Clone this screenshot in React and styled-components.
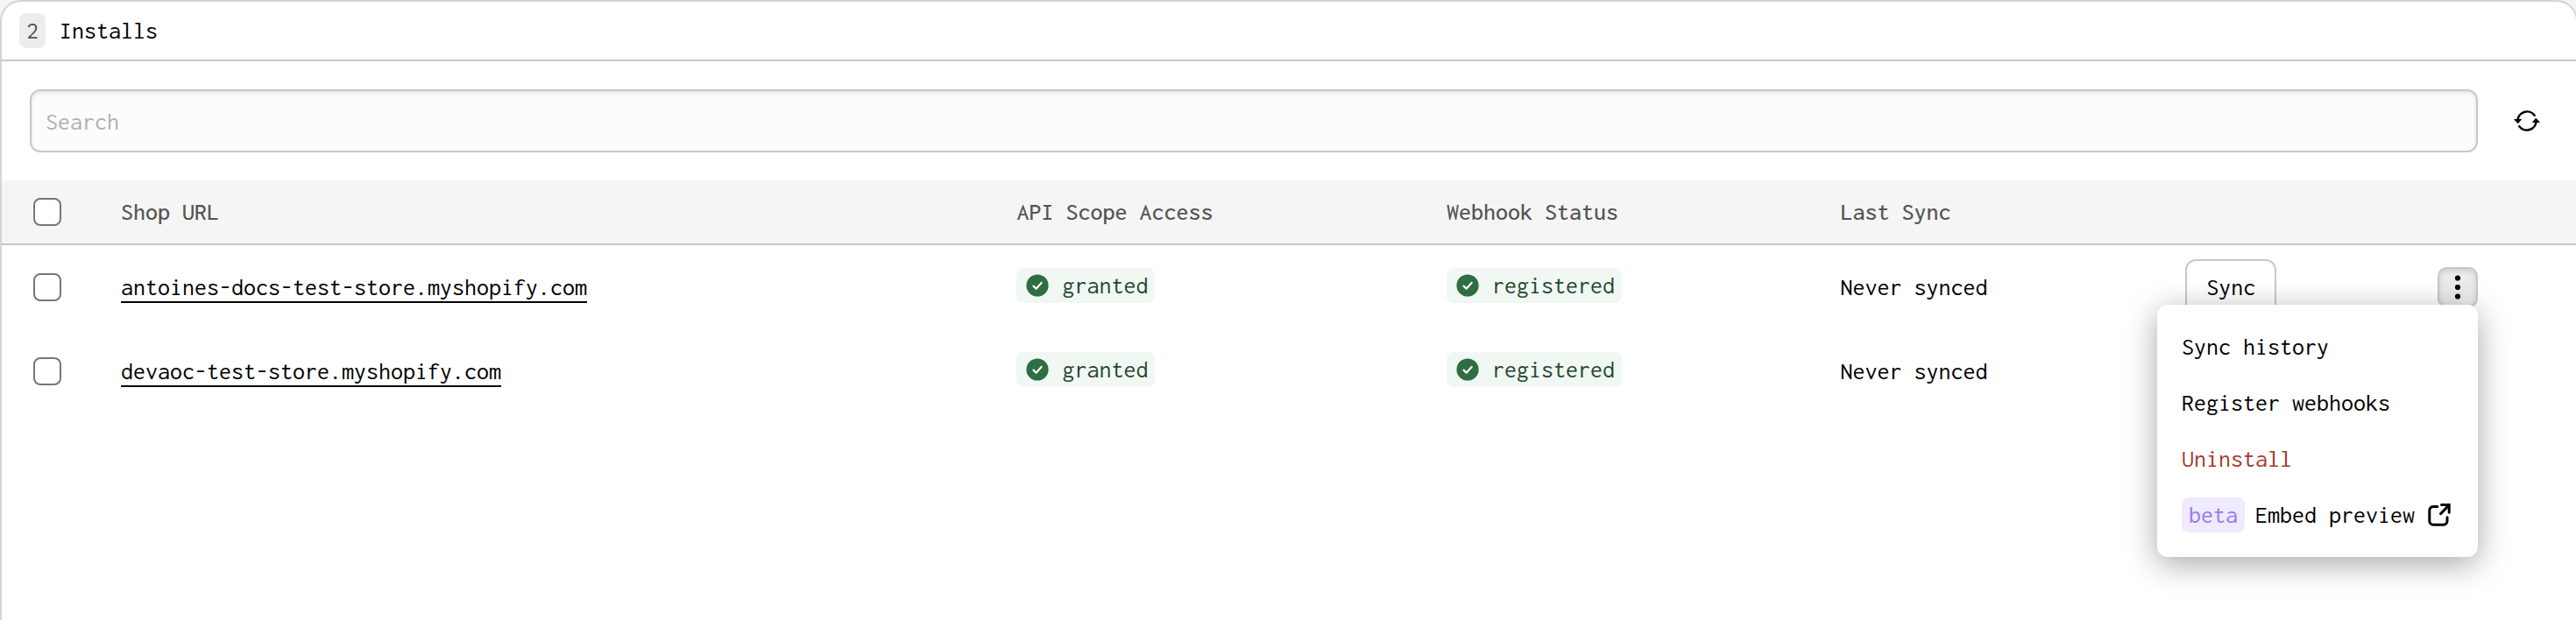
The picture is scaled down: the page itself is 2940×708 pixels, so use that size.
import React, { useState } from 'react';
import styled, { createGlobalStyle } from 'styled-components';

const GlobalStyle = createGlobalStyle`
  *, *::before, *::after {
    box-sizing: border-box;
  }

  body {
    margin: 0;
    background: #f5f5f5;
    color: #000;
    font-family: Inconsolata, 'Noto Sans Mono CJK SC', 'Liberation Mono', monospace;
    font-size: 28px;
    line-height: 40px;
    overflow: hidden;
  }

  button, input {
    font: inherit;
    color: inherit;
  }
`;

/* the right border runs just past the window edge */
const Panel = styled.main`
  margin-right: -2px;
  min-height: 100vh;
  background: #fff;
  border: 2px solid #d4d4d4;
  border-bottom: 0;
  border-radius: 24px 24px 0 0;
`;

const PanelHeader = styled.header`
  display: flex;
  align-items: center;
  gap: 16px;
  padding: 13px 20px;
  border-bottom: 2px solid #c8c8c8;
`;

const Title = styled.h1`
  margin: 0;
  font-size: 28px;
  font-weight: 400;
`;

const Tag = styled.span`
  display: inline-flex;
  align-items: center;
  gap: 12px;
  height: 40px;
  padding: 0 8px;
  border-radius: 8px;
  background: ${props => props.$bg || '#ededed'};
  color: ${props => props.$color || '#555'};
`;

const Toolbar = styled.div`
  display: flex;
  align-items: center;
  gap: 32px;
  padding: 32px;
`;

const SearchInput = styled.input`
  flex: 1;
  min-width: 0;
  height: 72px;
  padding: 0 16px;
  border: 2px solid #c8c8c8;
  border-radius: 12px;
  background: #fcfcfc;
  box-shadow: inset 0 2px 4px rgba(0, 0, 0, 0.1);

  &::placeholder {
    color: #b0b0b0;
    opacity: 1;
  }
`;

const IconButton = styled.button`
  display: flex;
  align-items: center;
  justify-content: center;
  width: 48px;
  height: 48px;
  padding: 0;
  border: 0;
  background: none;
  cursor: pointer;
`;

const Table = styled.table`
  width: 100%;
  table-layout: fixed;
  border-collapse: separate;
  border-spacing: 0;
`;

const Col = styled.col`
  width: ${props => props.$width};
`;

const HeadCell = styled.th`
  height: 74px;
  padding: 0;
  background: #f5f5f5;
  border-bottom: 2px solid #c4c4c4;
  color: #555;
  font-weight: 500;
  text-align: left;
`;

const Cell = styled.td`
  height: 96px;
  padding: 0;
`;

const TagCell = styled(Cell)`
  padding-bottom: 6px;

  ${Tag} {
    vertical-align: middle;
  }
`;

const Checkbox = styled.input`
  appearance: none;
  display: block;
  width: 32px;
  height: 32px;
  margin: 0 0 0 36px;
  border: 2px solid #767676;
  border-radius: 8px;
  background: #fff;

  &:checked {
    background: #767676;
  }
`;

const ShopLink = styled.a`
  color: inherit;
  text-decoration: none;
  border-bottom: 2px solid #000;
  display: inline-block;
  line-height: 32px;
`;

const SyncButton = styled.button`
  display: block;
  height: 64px;
  padding: 0 22px;
  border: 2px solid #c8c8c8;
  border-radius: 12px;
  background: #fff;
  cursor: pointer;
`;

const MenuAnchor = styled.div`
  position: relative;
  width: 46px;
  margin: 0 112px 0 auto;
`;

const MenuButton = styled(IconButton)`
  width: 46px;
  height: 46px;
  border: 2px solid #c8c8c8;
  border-radius: 10px;
  background: #ebebeb;
  box-shadow: inset 0 2px 6px rgba(0, 0, 0, 0.14);
`;

const Menu = styled.div`
  position: absolute;
  top: 43px;
  right: 0;
  z-index: 1;
  padding: 16px 0;
  border-radius: 12px;
  background: #fff;
  box-shadow: 0 8px 36px rgba(0, 0, 0, 0.35);
`;

const MenuItem = styled.button`
  display: flex;
  align-items: center;
  gap: 12px;
  width: 100%;
  height: 64px;
  padding: 0 28px;
  border: 0;
  background: none;
  color: ${props => (props.$danger ? '#a43a2c' : '#000')};
  text-decoration: none;
  white-space: nowrap;
  cursor: pointer;
`;

const RefreshIcon = () => (
  <svg width="32" height="32" viewBox="-16 -16 32 32" aria-hidden="true">
    <g fill="none" stroke="#000" strokeWidth="2.5" strokeLinecap="round">
      <path d="M-10.6 0A10.7 10.7 0 0 1 8.7 -6.2" />
      <path d="M10.6 0A10.7 10.7 0 0 1 -8.7 6.2" />
    </g>
    <g stroke="#000" strokeWidth="1" strokeLinejoin="round">
      <path d="M-14.2 -1.6H-6.6L-10.2 2.7Z" />
      <path d="M14.2 1.6H6.6L10.2 -2.7Z" />
    </g>
  </svg>
);

const CheckIcon = () => (
  <svg width="32" height="32" viewBox="0 0 32 32" aria-hidden="true">
    <circle cx="16" cy="16" r="12.6" fill="#2f6d42" />
    <path
      d="M11.5 16.6L14.6 19.7L20.6 12.9"
      fill="none"
      stroke="#fff"
      strokeWidth="2.2"
      strokeLinecap="round"
      strokeLinejoin="round"
    />
  </svg>
);

const KebabIcon = () => (
  <svg width="32" height="32" viewBox="0 0 32 32" aria-hidden="true">
    <circle cx="16" cy="5.5" r="3.1" />
    <circle cx="16" cy="16" r="3.1" />
    <circle cx="16" cy="26.5" r="3.1" />
  </svg>
);

const ExternalIcon = () => (
  <svg
    width="32"
    height="32"
    viewBox="0 0 32 32"
    fill="none"
    stroke="#000"
    strokeWidth="3"
    strokeLinecap="round"
    aria-hidden="true"
  >
    <path d="M13.8 6.6H9a4.2 4.2 0 0 0-4.2 4.2V23a4.2 4.2 0 0 0 4.2 4.2h11.8A4.2 4.2 0 0 0 25 23v-4.2" />
    <path d="M18.5 4.6h8.7v8.7M26.6 5.2L17.6 14.6" />
  </svg>
);

const StatusTag = ({ children }) => (
  <Tag $bg="#f1f8f4" $color="#26472f">
    <CheckIcon />
    {children}
  </Tag>
);

const installs = [
  { url: 'antoines-docs-test-store.myshopify.com', scope: 'granted', webhook: 'registered', lastSync: 'Never synced' },
  { url: 'devaoc-test-store.myshopify.com', scope: 'granted', webhook: 'registered', lastSync: 'Never synced' },
];

const App = () => {
  const [activeRow, setActiveRow] = useState(0);
  const [menuOpen, setMenuOpen] = useState(true);

  const handleEnter = index => {
    // keep the current row while its menu is open
    if (!menuOpen) setActiveRow(index);
  };

  return (
    <>
      <GlobalStyle />
      <Panel>
        <PanelHeader>
          <Tag>{installs.length}</Tag>
          <Title>Installs</Title>
        </PanelHeader>

        <Toolbar>
          <SearchInput type="search" placeholder="Search" aria-label="Search" />
          <IconButton type="button" aria-label="Refresh">
            <RefreshIcon />
          </IconButton>
        </Toolbar>

        <Table>
          <colgroup>
            <Col $width="136px" />
            <Col $width="34.8%" />
            <Col $width="16.7%" />
            <Col $width="15.3%" />
            <Col $width="13.4%" />
            <Col />
            <Col $width="12%" />
          </colgroup>
          <thead>
            <tr>
              <HeadCell>
                <Checkbox type="checkbox" aria-label="Select all installs" />
              </HeadCell>
              <HeadCell>Shop URL</HeadCell>
              <HeadCell>API Scope Access</HeadCell>
              <HeadCell>Webhook Status</HeadCell>
              <HeadCell>Last Sync</HeadCell>
              <HeadCell colSpan={2} />
            </tr>
          </thead>
          <tbody>
            {installs.map((install, index) => (
              <tr key={install.url} onMouseEnter={() => handleEnter(index)}>
                <Cell>
                  <Checkbox type="checkbox" aria-label={`Select ${install.url}`} />
                </Cell>
                <Cell>
                  <ShopLink href={`https://${install.url}`}>{install.url}</ShopLink>
                </Cell>
                <TagCell>
                  <StatusTag>{install.scope}</StatusTag>
                </TagCell>
                <TagCell>
                  <StatusTag>{install.webhook}</StatusTag>
                </TagCell>
                <Cell>{install.lastSync}</Cell>
                <Cell>
                  {index === activeRow && <SyncButton type="button">Sync</SyncButton>}
                </Cell>
                <Cell>
                  {index === activeRow && (
                    <MenuAnchor>
                      <MenuButton
                        type="button"
                        aria-label="More actions"
                        aria-expanded={menuOpen}
                        onClick={() => setMenuOpen(!menuOpen)}
                      >
                        <KebabIcon />
                      </MenuButton>
                      {menuOpen && (
                        <Menu>
                          <MenuItem type="button">Sync history</MenuItem>
                          <MenuItem type="button">Register webhooks</MenuItem>
                          <MenuItem type="button" $danger>Uninstall</MenuItem>
                          <MenuItem as="a" href="#embed-preview">
                            <Tag $bg="#efeafd" $color="#9a78f5">beta</Tag>
                            Embed preview
                            <ExternalIcon />
                          </MenuItem>
                        </Menu>
                      )}
                    </MenuAnchor>
                  )}
                </Cell>
              </tr>
            ))}
          </tbody>
        </Table>
      </Panel>
    </>
  );
};

export default App;
